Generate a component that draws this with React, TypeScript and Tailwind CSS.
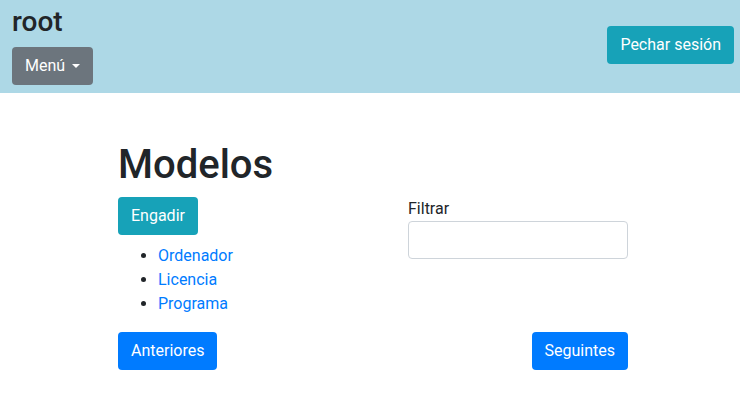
import React from 'react';

const font = { fontFamily: 'Roboto, "Liberation Sans", sans-serif' };

const btn = 'inline-flex items-center px-3 py-[6px] text-base leading-6 rounded border border-transparent text-white';

const App: React.FC = () => {
  const items = ['Ordenador', 'Licencia', 'Programa'];

  return (
    <div className="min-h-screen bg-white text-[#212529]" style={font}>
      {/* Header */}
      <header className="h-[93px] bg-[#add8e6] flex justify-between">
        <div className="pl-3 pt-[5px]">
          <h3 className="text-[28px] font-medium leading-[1.2] mb-2">root</h3>
          <button className={`${btn} bg-[#6c757d]`}>
            Menú
            <span className="inline-block w-0 h-0 ml-[7px] mt-[1px] border-t-[4px] border-x-[4px] border-x-transparent border-t-white" />
          </button>
        </div>
        <div className="pr-[6px] pt-[26px]">
          <button className={`${btn} bg-[#17a2b8]`}>Pechar sesión</button>
        </div>
      </header>

      {/* Main */}
      <main className="ml-[118px] w-[510px] pt-[48px]">
        <h1 className="text-[40px] font-medium leading-[1.2] mb-2">Modelos</h1>

        <div className="flex justify-between">
          <div>
            <button className={`${btn} bg-[#17a2b8]`}>Engadir</button>
            <ul className="list-disc pl-10 mt-[9px] leading-6">
              {items.map(i => (
                <li key={i}>
                  <a href="#" className="text-[#007bff]">{i}</a>
                </li>
              ))}
            </ul>
          </div>
          <div className="w-[220px]">
            <label className="block leading-6">Filtrar</label>
            <input className="block w-full h-[38px] border border-[#ced4da] rounded px-3 bg-white outline-none" />
          </div>
        </div>

        <div className="flex justify-between mt-[16px]">
          <button className={`${btn} bg-[#007bff]`}>Anteriores</button>
          <button className={`${btn} bg-[#007bff]`}>Seguintes</button>
        </div>
      </main>
    </div>
  );
};

export default App;
